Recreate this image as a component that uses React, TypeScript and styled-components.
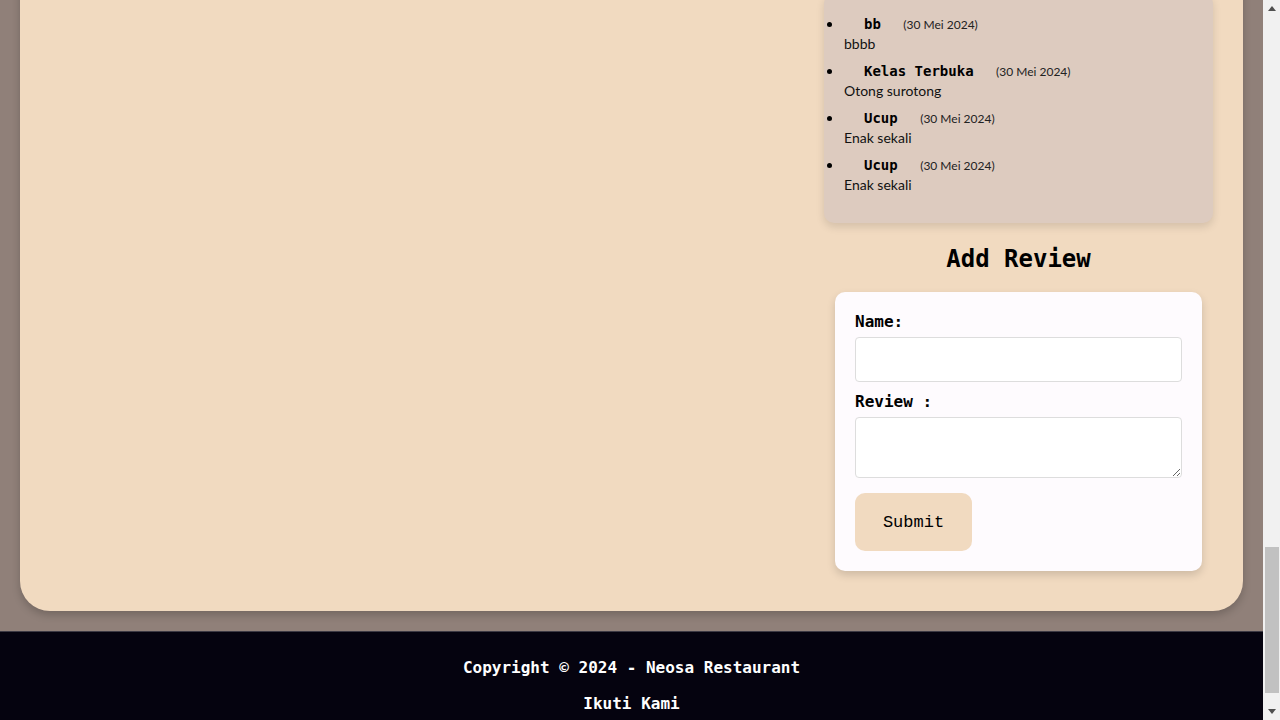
import { useLayoutEffect, useRef } from "react";
import styled, { createGlobalStyle } from "styled-components";

const reviews = [
  { name: "bb", date: "30 Mei 2024", text: "bbbb" },
  { name: "Kelas Terbuka", date: "30 Mei 2024", text: "Otong surotong" },
  { name: "Ucup", date: "30 Mei 2024", text: "Enak sekali" },
  { name: "Ucup", date: "30 Mei 2024", text: "Enak sekali" },
];

function Arrow({ down }: { down?: boolean }) {
  return (
    <ArrowButton>
      <svg width="8" height="5" viewBox="0 0 8 5">
        {down ? <path d="M0 0h8L4 5z" fill="#505050" /> : <path d="M4 0l4 5H0z" fill="#505050" />}
      </svg>
    </ArrowButton>
  );
}

export default function App() {
  const viewRef = useRef<HTMLDivElement>(null);

  useLayoutEffect(() => {
    const el = viewRef.current;
    if (el) el.scrollTop = el.scrollHeight;
  }, []);

  return (
    <>
      <GlobalStyle />
      <Window>
        <Viewport ref={viewRef}>
          <MainCard>
            <LeftColumn />
            <RightColumn>
              <ReviewBox>
                <ReviewList>
                  {reviews.map((r, i) => (
                    <ReviewItem key={i}>
                      <ReviewHead>
                        <ReviewName>{r.name}</ReviewName> <ReviewDate>({r.date})</ReviewDate>
                      </ReviewHead>
                      <ReviewText>{r.text}</ReviewText>
                    </ReviewItem>
                  ))}
                </ReviewList>
              </ReviewBox>
              <Title>Add Review</Title>
              <FormCard onSubmit={(e) => e.preventDefault()}>
                <Label htmlFor="name">Name:</Label>
                <Input id="name" type="text" />
                <Label htmlFor="review">Review :</Label>
                <TextArea id="review" />
                <Button type="submit">Submit</Button>
              </FormCard>
            </RightColumn>
          </MainCard>
          <Footer>
            <FooterText>Copyright © 2024 - Neosa Restaurant</FooterText>
            <FooterText>Ikuti Kami</FooterText>
          </Footer>
        </Viewport>
        <ScrollTrack>
          <Arrow />
          <TrackSpace />
          <Thumb />
          <TrackEnd />
          <Arrow down />
        </ScrollTrack>
      </Window>
    </>
  );
}

const GlobalStyle = createGlobalStyle`
  html, body {
    margin: 0;
    padding: 0;
    height: 100%;
    overflow: hidden;
  }
  * {
    box-sizing: border-box;
  }
`;

const Window = styled.div`
  display: flex;
  height: 100vh;
`;

const Viewport = styled.div`
  flex: 1;
  overflow-y: scroll;
  scrollbar-width: none;
  background: #908079;
  padding-top: 20px;
  font-family: "DejaVu Sans Mono", "Liberation Mono", monospace;
  &::-webkit-scrollbar {
    display: none;
  }
`;

const ScrollTrack = styled.div`
  width: 17px;
  flex-shrink: 0;
  background: #f1f1f1;
  display: flex;
  flex-direction: column;
`;

const ArrowButton = styled.div`
  height: 17px;
  display: flex;
  align-items: center;
  justify-content: center;
  padding-left: 1px;
`;

const TrackSpace = styled.div`
  flex: 1;
`;

const Thumb = styled.div`
  height: 146px;
  margin: 0 1px 0 2px;
  background: #c1c1c1;
`;

const TrackEnd = styled.div`
  height: 10px;
`;

const MainCard = styled.main`
  margin: 0 20px;
  padding: 30px 30px 40px;
  background: #f1dac0;
  border-radius: 30px;
  box-shadow: 0 4px 8px rgba(0, 0, 0, 0.2);
  display: grid;
  grid-template-columns: 1fr 389px;
  gap: 30px;
`;

const LeftColumn = styled.div`
  min-height: 3070px;
`;

const RightColumn = styled.div`
  align-self: end;
  display: flex;
  flex-direction: column;
`;

const ReviewBox = styled.div`
  background: #ddcbbf;
  border-radius: 10px;
  padding: 20px 20px 22px 0;
  box-shadow: 0 4px 8px rgba(0, 0, 0, 0.12);
`;

const ReviewList = styled.ul`
  margin: 0;
  padding-left: 20px;
`;

const ReviewItem = styled.li`
  margin-bottom: 6px;
  font-size: 14px;
  color: #111;
  &::marker {
    font-size: 17px;
    color: #000;
  }
`;

const ReviewHead = styled.div`
  line-height: 19px;
`;

const ReviewName = styled.strong`
  margin: 0 14px 0 20px;
  font-size: 14px;
  color: #000;
`;

const ReviewDate = styled.span`
  font-family: Lato, "Open Sans", sans-serif;
  font-size: 12px;
  color: #222;
`;

const ReviewText = styled.div`
  font-family: Lato, "Open Sans", sans-serif;
  font-size: 14px;
  line-height: 20px;
  color: #111;
`;

const Title = styled.h2`
  margin: 21px 0 18px;
  font-size: 24px;
  line-height: 30px;
  text-align: center;
  color: #000;
`;

const FormCard = styled.form`
  margin: 0 11px;
  padding: 20px;
  background: #fefbfe;
  border-radius: 10px;
  box-shadow: 0 4px 8px rgba(0, 0, 0, 0.15);
  display: flex;
  flex-direction: column;
  align-items: flex-start;
`;

const Label = styled.label`
  font-size: 16px;
  font-weight: bold;
  line-height: 20px;
  margin-bottom: 5px;
  color: #000;
`;

const Input = styled.input`
  width: 100%;
  height: 45px;
  margin-bottom: 10px;
  border: 1px solid #dddddd;
  border-radius: 4px;
  background: #fff;
  padding: 0 10px;
  font-size: 14px;
`;

const TextArea = styled.textarea`
  display: block;
  width: 100%;
  height: 61px;
  margin-bottom: 15px;
  border: 1px solid #dddddd;
  border-radius: 4px;
  background: #fff;
  padding: 8px 10px;
  font-size: 14px;
`;

const Button = styled.button`
  width: 117px;
  height: 58px;
  border: none;
  border-radius: 10px;
  background: #f1dac0;
  font-family: "Liberation Mono", "DejaVu Sans Mono", monospace;
  font-size: 17px;
  color: #000;
  cursor: pointer;
`;

const Footer = styled.footer`
  margin-top: 20px;
  border-top: 1px solid #3d3a44;
  background: #05030f;
  padding: 26px 0 6px;
  display: flex;
  flex-direction: column;
  align-items: center;
  gap: 16px;
`;

const FooterText = styled.p`
  margin: 0;
  font-size: 16px;
  line-height: 20px;
  font-weight: bold;
  color: #fff;
`;
